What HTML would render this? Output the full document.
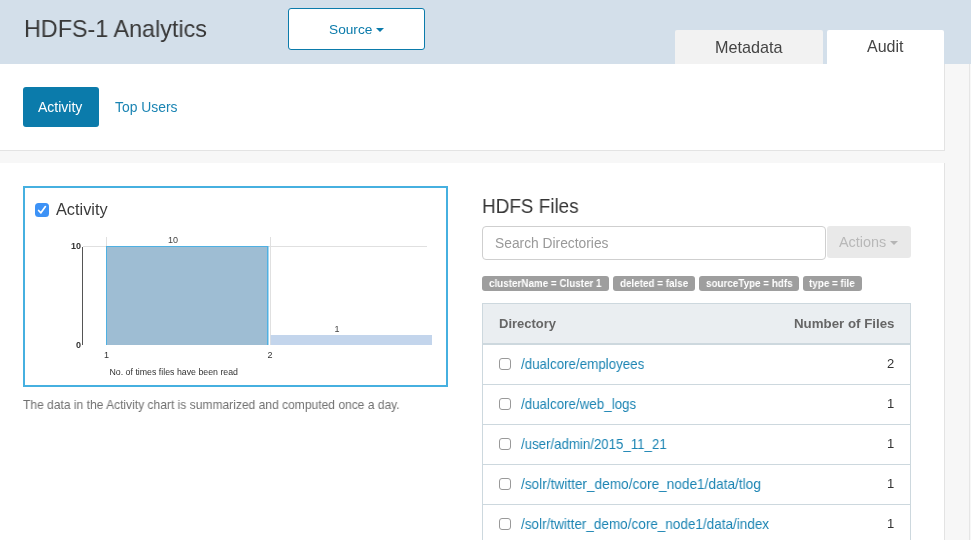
<!DOCTYPE html>
<html><head><meta charset="utf-8">
<style>
*{box-sizing:border-box;margin:0;padding:0}
html,body{width:971px;height:540px;overflow:hidden;background:#f7f7f7;font-family:"Liberation Sans",sans-serif;color:#333}
.a{position:absolute}
.t{position:absolute;white-space:nowrap;line-height:1;will-change:transform}
.caret{position:absolute;width:0;height:0;border-left:4px solid transparent;border-right:4px solid transparent;border-top:4px solid currentColor}
#hdr{left:0;top:0;width:971px;height:64px;background:#d3dfea}
#t_title{left:24.3px;top:16.8px;font-size:24px;color:#383838;transform:scaleX(0.973);transform-origin:0 0}
#srcbtn{left:288px;top:8px;width:137px;height:42px;background:#fff;border:1px solid #0b7bab;border-radius:3px}
#t_source{left:329px;top:22.5px;font-size:13.7px;color:#0b7bab}
.tab{top:30px;height:34px;border-radius:2px 2px 0 0}
#tabm{left:675px;width:148px;background:#f2f2f2}
#taba{left:827px;width:117px;background:#fff}
#t_meta{left:715px;top:38.5px;font-size:16.2px;color:#444}
#t_audit{left:867px;top:38.5px;font-size:16px;color:#444}
#p1{left:0;top:64px;width:945px;height:87px;background:#fff;border-right:1px solid #e3e3e3;border-bottom:1px solid #e3e3e3}
#actbtn{left:23px;top:87px;width:76px;height:40px;background:#0b7bab;border-radius:3px}
#t_actbtn{left:37.8px;top:100.3px;font-size:14px;color:#fff}
#t_topusers{left:115.3px;top:100.5px;font-size:13.9px;color:#1a84b3}
#p2{left:0;top:163px;width:945px;height:400px;background:#fff;border-right:1px solid #e3e3e3}
#vline{left:969px;top:64px;width:1px;height:476px;background:#e6e6e6}
#card{left:23px;top:186px;width:425px;height:201px;border:2px solid #46b0e0}
#chk{left:35px;top:203px;width:14px;height:14px;background:#3d92f6;border-radius:3.5px}
#t_acttitle{left:56px;top:200.5px;font-size:16.3px;color:#3a3a3a}
#t_note{left:23px;top:398.6px;font-size:12.4px;color:#707070;transform:scaleX(0.972);transform-origin:0 0}
#t_hdfs{left:482px;top:195.8px;font-size:20px;color:#363636;transform:scaleX(0.945);transform-origin:0 0}
#search{left:482px;top:226px;width:344px;height:34px;border:1px solid #cfcfcf;border-radius:4px;background:#fff}
#t_ph{left:495px;top:237px;font-size:13.8px;color:#999}
#actions{left:827px;top:226px;width:84px;height:32px;background:#e9e9e9;border-radius:3px}
#t_actions{left:839px;top:235.3px;font-size:14.4px;color:#b8b8b8}
.tag{top:276px;height:15px;background:#9e9e9e;border-radius:3px}
.tt{top:277.6px;font-size:10.6px;font-weight:bold;color:#fff;transform:scaleX(0.93);transform-origin:0 0}
#tbl{left:482px;top:303px;width:429px;height:260px;border:1px solid #cdd8de;border-bottom:none}
#thead{left:483px;top:304px;width:427px;height:41px;background:#eaeef1;border-bottom:2px solid #cdd8de}
.th{top:317px;font-size:13px;font-weight:bold;color:#666}
.row{left:483px;width:427px;height:40px;border-bottom:1px solid #cdd8de}
.cb{left:499px;width:12px;height:12px;border:1px solid #999;border-radius:3px;background:#fff}
.lnk{left:521px;font-size:14.3px;color:#1b84b3;transform:scaleX(0.935);transform-origin:0 0}
.num{font-size:13px;color:#333}
</style></head><body>
<div id="hdr" class="a"></div>
<div id="t_title" class="t">HDFS-1 Analytics</div>
<div id="srcbtn" class="a"></div>
<div id="t_source" class="t">Source</div>
<div class="caret" style="left:376px;top:28px;color:#0b7bab"></div>
<div id="tabm" class="a tab"></div>
<div id="taba" class="a tab"></div>
<div id="t_meta" class="t">Metadata</div>
<div id="t_audit" class="t">Audit</div>
<div id="p1" class="a"></div>
<div id="actbtn" class="a"></div>
<div id="t_actbtn" class="t">Activity</div>
<div id="t_topusers" class="t">Top Users</div>
<div id="p2" class="a"></div>
<div id="vline" class="a"></div>

<div id="card" class="a"></div>
<div id="chk" class="a"><svg width="14" height="14" viewBox="0 0 14 14" style="display:block"><path d="M3.6 7.5 L5.9 9.8 L10.4 3.6" fill="none" stroke="#fff" stroke-width="1.7" stroke-linecap="round" stroke-linejoin="round"/></svg></div>
<div id="t_acttitle" class="t">Activity</div>
<svg class="a" style="left:0;top:0;will-change:transform" width="460" height="390">
  <line x1="106.5" y1="237" x2="106.5" y2="345" stroke="#e0e0e0" stroke-width="1"/>
  <line x1="270.5" y1="237" x2="270.5" y2="345" stroke="#e0e0e0" stroke-width="1"/>
  <line x1="83" y1="246.5" x2="427" y2="246.5" stroke="#e0e0e0" stroke-width="1"/>
  <line x1="82.5" y1="247" x2="82.5" y2="345" stroke="#555" stroke-width="1"/>
  <rect x="106" y="246" width="162" height="99" fill="#9ebdd3"/>
  <rect x="106" y="246" width="162" height="1" fill="#4fb0e2"/>
  <rect x="106" y="246" width="1" height="99" fill="#4fb0e2"/>
  <rect x="267" y="246" width="1.5" height="99" fill="#4fb0e2"/>
  <rect x="270" y="335" width="162" height="10" fill="#c3d5ec"/>
  <line x1="270.5" y1="335" x2="270.5" y2="345" stroke="#d6dbe3" stroke-width="1"/>
  <text x="173" y="243" font-size="9" text-anchor="middle" fill="#444" font-family="Liberation Sans">10</text>
  <text x="337" y="332" font-size="9" text-anchor="middle" fill="#444" font-family="Liberation Sans">1</text>
  <text x="81" y="249" font-size="9" font-weight="bold" text-anchor="end" fill="#333" font-family="Liberation Sans">10</text>
  <text x="81" y="348" font-size="9" font-weight="bold" text-anchor="end" fill="#333" font-family="Liberation Sans">0</text>
  <text x="106.5" y="358" font-size="9" text-anchor="middle" fill="#333" font-family="Liberation Sans">1</text>
  <text x="270" y="358" font-size="9" text-anchor="middle" fill="#333" font-family="Liberation Sans">2</text>
  <text x="109.5" y="374.6" font-size="9" fill="#333" font-family="Liberation Sans" textLength="128.5" lengthAdjust="spacingAndGlyphs">No. of times files have been read</text>
</svg>
<div id="t_note" class="t">The data in the Activity chart is summarized and computed once a day.</div>

<div id="t_hdfs" class="t">HDFS Files</div>
<div id="search" class="a"></div>
<div id="t_ph" class="t">Search Directories</div>
<div id="actions" class="a"></div>
<div id="t_actions" class="t">Actions</div>
<div class="caret" style="left:890px;top:241px;color:#b5b5b5"></div>
<div class="a tag" style="left:482px;width:127px"></div>
<div class="a tag" style="left:613px;width:82px"></div>
<div class="a tag" style="left:699px;width:100px"></div>
<div class="a tag" style="left:803px;width:59px"></div>
<div id="t_tag1" class="t tt" style="left:488.7px">clusterName = Cluster 1</div>
<div id="t_tag2" class="t tt" style="left:619.5px">deleted = false</div>
<div id="t_tag3" class="t tt" style="left:705.5px">sourceType = hdfs</div>
<div id="t_tag4" class="t tt" style="left:809.3px">type = file</div>

<div id="tbl" class="a"></div>
<div id="thead" class="a"></div>
<div id="t_dir" class="t th" style="left:499px">Directory</div>
<div id="t_nof" class="t th" style="left:794px;font-size:13.3px">Number of Files</div>

<div class="a row" style="top:345px"></div>
<div class="a row" style="top:385px"></div>
<div class="a row" style="top:425px"></div>
<div class="a row" style="top:465px"></div>
<div class="a row" style="top:505px"></div>
<div class="a cb" style="top:358px"></div>
<div class="a cb" style="top:398px"></div>
<div class="a cb" style="top:438px"></div>
<div class="a cb" style="top:478px"></div>
<div class="a cb" style="top:518px"></div>
<div id="t_l1" class="t lnk" style="top:356.6px">/dualcore/employees</div>
<div id="t_l2" class="t lnk" style="top:396.6px">/dualcore/web_logs</div>
<div id="t_l3" class="t lnk" style="transform:scaleX(0.927);top:436.6px">/user/admin/2015_11_21</div>
<div id="t_l4" class="t lnk" style="transform:scaleX(0.955);top:476.6px">/solr/twitter_demo/core_node1/data/tlog</div>
<div id="t_l5" class="t lnk" style="transform:scaleX(0.946);top:516.6px">/solr/twitter_demo/core_node1/data/index</div>
<div id="t_n1" class="t num" style="left:887px;top:357px">2</div>
<div id="t_n2" class="t num" style="left:887px;top:397px">1</div>
<div id="t_n3" class="t num" style="left:887px;top:437px">1</div>
<div id="t_n4" class="t num" style="left:887px;top:477px">1</div>
<div id="t_n5" class="t num" style="left:887px;top:517px">1</div>
</body></html>
